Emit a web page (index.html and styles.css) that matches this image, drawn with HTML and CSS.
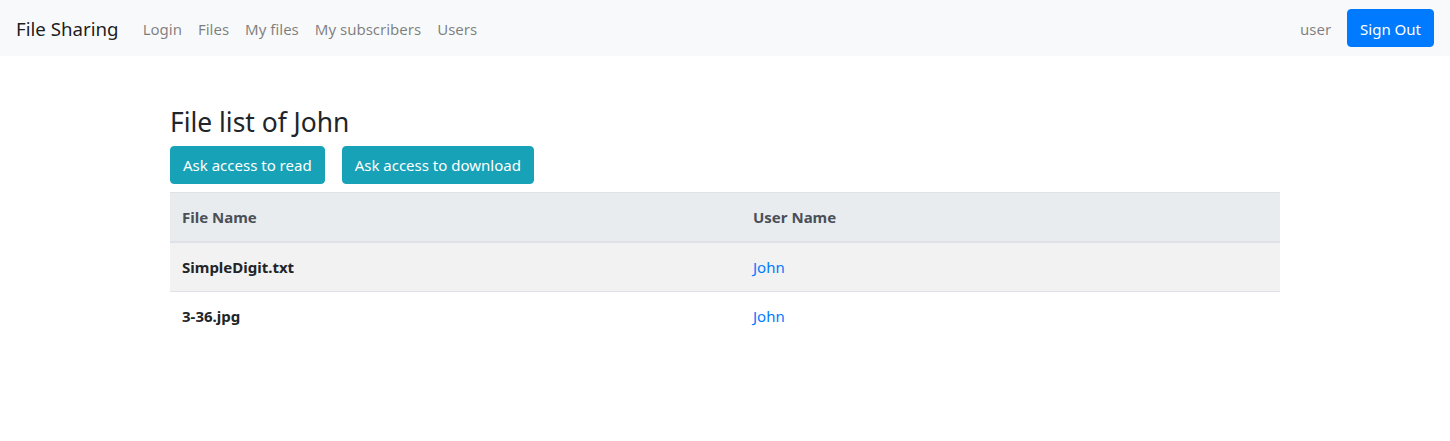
FILE: index.html
```html
<!DOCTYPE html>
<html lang="en">
<head>
<meta charset="utf-8">
<title>File Sharing</title>
<link rel="stylesheet" href="styles.css">
</head>
<body>
<nav class="navbar">
  <a class="brand" href="#">File Sharing</a>
  <ul class="nav">
    <li><a class="nav-link" href="#">Login</a></li>
    <li><a class="nav-link" href="#">Files</a></li>
    <li><a class="nav-link" href="#">My files</a></li>
    <li><a class="nav-link" href="#">My subscribers</a></li>
    <li><a class="nav-link" href="#">Users</a></li>
  </ul>
  <div class="nav-right">
    <span class="nav-link">user</span>
    <button class="btn btn-primary btn-nav">Sign Out</button>
  </div>
</nav>
<main class="container">
  <h3 class="title">File list of John</h3>
  <div class="actions">
    <button class="btn btn-info">Ask access to read</button>
    <button class="btn btn-info">Ask access to download</button>
  </div>
  <table class="table">
    <thead>
      <tr><th class="col-file">File Name</th><th>User Name</th></tr>
    </thead>
    <tbody>
      <tr class="odd"><th>SimpleDigit.txt</th><td><a href="#">John</a></td></tr>
      <tr><th>3-36.jpg</th><td><a href="#">John</a></td></tr>
    </tbody>
  </table>
</main>
</body>
</html>
```
FILE: styles.css
```css
* { box-sizing: border-box; }
body {
  margin: 0;
  font-family: "Noto Sans", "Open Sans", sans-serif;
  font-size: 15px;
  line-height: 24px;
  color: #212529;
  background: #fff;
}
a { text-decoration: none; }
.navbar {
  display: flex;
  align-items: center;
  height: 56px;
  padding: 8px 16px;
  background: #f8f9fa;
}
.brand {
  font-size: 18.7px;
  line-height: 30px;
  padding-top: 2px;
  color: rgba(0,0,0,.9);
  margin-right: 16px;
}
.nav {
  display: flex;
  list-style: none;
  margin: 0;
  padding: 0;
}
.nav-link {
  display: block;
  padding: 9px 8px 7px;
  color: rgba(0,0,0,.5);
}
.nav-right {
  margin-left: auto;
  display: flex;
  align-items: center;
  gap: 8px;
}
.btn {
  font-family: inherit;
  font-size: 15px;
  line-height: 24px;
  padding: 6px 12px;
  border: 1px solid transparent;
  border-radius: 4px;
  color: #fff;
  cursor: pointer;
}
.btn-nav { padding: 7px 12px 5px; }
.btn-primary { background: #007bff; border-color: #007bff; }
.btn-info { background: #17a2b8; border-color: #17a2b8; }
.container {
  width: 1140px;
  margin: 0 auto;
  padding: 48px 15px 0;
}
.title {
  margin: 0 0 8px;
  padding-top: 3px;
  height: 33.6px;
  font-size: 26.4px;
  font-weight: 400;
  line-height: 1.2;
}
.actions {
  display: flex;
  gap: 17px;
  margin-bottom: 8px;
}
.table {
  width: 100%;
  border-collapse: collapse;
}
.table th, .table td {
  padding: 12px;
  text-align: left;
  vertical-align: top;
  border-top: 1px solid #dee2e6;
}
.table thead th {
  background: #e9ecef;
  color: #495057;
  border-bottom: 2px solid #dee2e6;
}
.col-file { width: 571px; }
.table tbody th { font-weight: 700; }
.table tbody tr.odd { background: rgba(0,0,0,.05); }
.table td a { color: #007bff; }
```
